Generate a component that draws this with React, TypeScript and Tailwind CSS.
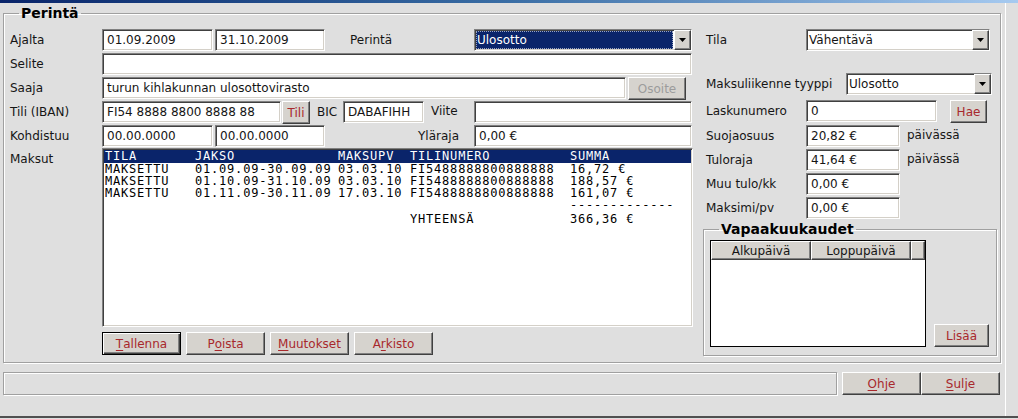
import type { ReactNode } from 'react'

const sunken =
  'border border-t-[#808080] border-l-[#808080] border-b-white border-r-white shadow-[inset_1px_1px_0_#404040,inset_-1px_-1px_0_#d4d0c8] bg-white'
const raised =
  'border border-t-white border-l-white border-b-[#404040] border-r-[#404040] shadow-[inset_-1px_-1px_0_#808080] bg-[#d6d3ce]'
const etched = 'border border-[#a0a0a0] shadow-[inset_1px_1px_0_#fff,1px_1px_0_#fff]'
const cols = 'grid grid-cols-[90px_143px_72px_160px_1fr]'

const PAYMENTS = [
  ['MAKSETTU', '01.09.09-30.09.09', '03.03.10', 'FI5488888800888888', '16,72 €'],
  ['MAKSETTU', '01.10.09-31.10.09', '03.03.10', 'FI5488888800888888', '188,57 €'],
  ['MAKSETTU', '01.11.09-30.11.09', '17.03.10', 'FI5488888800888888', '161,07 €'],
]

function Field({ className = '', value = '' }: { className?: string; value?: string }) {
  return (
    <div className={`${sunken} h-[22px] shrink-0 px-[4px] pt-[3px] leading-[15px] whitespace-nowrap overflow-hidden ${className}`}>
      {value}
    </div>
  )
}

function Btn({ className = '', children, disabled, main }: { className?: string; children: ReactNode; disabled?: boolean; main?: boolean }) {
  const frame = main
    ? 'border border-black shadow-[inset_1px_1px_0_#fff,inset_-1px_-1px_0_#404040,inset_-2px_-2px_0_#808080] bg-[#d6d3ce]'
    : raised
  return (
    <div
      className={`${frame} h-[23px] shrink-0 flex items-center justify-center leading-[14px] whitespace-nowrap ${
        disabled ? 'text-[#9c9c9c]' : 'text-[#a8282c]'
      } ${className}`}
    >
      {children}
    </div>
  )
}

function Arrow() {
  return (
    <div className={`${raised} w-[17px] shrink-0 flex items-center justify-center`}>
      <svg width="7" height="4" viewBox="0 0 7 4">
        <polygon points="0,0 7,0 3.5,4" fill="#000" />
      </svg>
    </div>
  )
}

function Select({ className = '', value, active }: { className?: string; value: string; active?: boolean }) {
  return (
    <div className={`${sunken} h-[22px] shrink-0 flex ${className}`}>
      <div className="flex-1 min-w-0 p-[1px] flex">
        <span
          className={`flex-1 px-[1px] pt-[2px] leading-[15px] whitespace-nowrap ${
            active ? 'bg-[#0a246a] text-white outline-1 outline-dotted outline-[#9aa4c0] -outline-offset-1' : ''
          }`}
        >
          {value}
        </span>
      </div>
      <Arrow />
    </div>
  )
}

function U({ children }: { children: ReactNode }) {
  return <span className="underline underline-offset-2">{children}</span>
}

export default function App() {
  return (
    <div className="w-[1018px] h-[419px] overflow-hidden bg-[#dfdfdf] font-['DejaVu_Sans',sans-serif] text-[12px] text-[#151515] flex flex-col">
      <div className="h-[3px] shrink-0 bg-linear-to-r from-[#0a246a] via-[#3a6ea5] to-[#a6caf0]" />

      <div className="w-[1006px] h-[413px] shrink-0 pl-[3px] border-r border-r-white flex flex-col">
        {/* main group */}
        <fieldset className={`${etched} mt-[2px] w-[998px] h-[358px] shrink-0 px-[6px]`}>
          <legend className="ml-[9px] px-[2px] font-bold text-[14px] leading-[16px] text-black">Perintä</legend>
          <div className="flex gap-[13px] pt-[8px]">
            {/* left column */}
            <div className="w-[683px] shrink-0 flex flex-col">
              <div className="flex h-[22px]">
                <span className="w-[92px] pt-[2px]">Ajalta</span>
                <Field className="w-[111px]" value="01.09.2009" />
                <Field className="ml-[2px] w-[110px]" value="31.10.2009" />
                <span className="w-[149px] pl-[25px] pt-[2px]">Perintä</span>
                <Select className="w-[218px]" value="Ulosotto" active />
              </div>
              <div className="flex h-[22px] mt-[2px]">
                <span className="w-[92px] pt-[2px]">Selite</span>
                <Field className="w-[590px]" />
              </div>
              <div className="flex h-[22px] mt-[2px]">
                <span className="w-[92px] pt-[2px]">Saaja</span>
                <Field className="w-[524px]" value="turun kihlakunnan ulosottovirasto" />
                <Btn className="ml-[2px] w-[58px]" disabled>
                  Osoite
                </Btn>
              </div>
              <div className="flex h-[22px] mt-[2px]">
                <span className="w-[92px] pt-[2px]">Tili (IBAN)</span>
                <Field className="w-[179px]" value="FI54 8888 8800 8888 88" />
                <Btn className="ml-[1px] w-[28px] h-[22px]">Tili</Btn>
                <span className="ml-[7px] w-[26px] pt-[2px]">BIC</span>
                <Field className="w-[81px]" value="DABAFIHH" />
                <span className="w-[50px] pl-[7px] pt-[1px]">Viite</span>
                <Field className="w-[218px]" />
              </div>
              <div className="flex h-[22px] mt-[2px]">
                <span className="w-[92px] pt-[2px]">Kohdistuu</span>
                <Field className="w-[111px]" value="00.00.0000" />
                <Field className="ml-[2px] w-[110px]" value="00.00.0000" />
                <span className="w-[149px] pr-[15px] pt-[2px] text-right">Yläraja</span>
                <Field className="w-[218px]" value="0,00 €" />
              </div>
              <div className="flex mt-[1px]">
                <span className="w-[92px] pt-[2px]">Maksut</span>
                <div
                  className={`${sunken} w-[591px] h-[179px] font-['DejaVu_Sans_Mono',monospace] text-[12px] tracking-[0.8px] text-black`}
                >
                  <div className={`${cols} bg-[#0a246a] text-white h-[13px] leading-[13px] pl-[1px] mt-[1px] mx-[1px]`}>
                    <span>TILA</span>
                    <span>JAKSO</span>
                    <span>MAKSUPV</span>
                    <span>TILINUMERO</span>
                    <span>SUMMA</span>
                  </div>
                  {PAYMENTS.map((p, i) => (
                    <div key={i} className={`${cols} h-[12px] leading-[12px] pl-[2px] whitespace-pre`}>
                      {p.map((c, j) => (
                        <span key={j}>{c}</span>
                      ))}
                    </div>
                  ))}
                  <div className={`${cols} h-[12px] leading-[12px] pl-[2px]`}>
                    <span />
                    <span />
                    <span />
                    <span />
                    <span>-------------</span>
                  </div>
                  <div className={`${cols} h-[12px] leading-[12px] pl-[2px] mt-[2px]`}>
                    <span />
                    <span />
                    <span />
                    <span>YHTEENSÄ</span>
                    <span>366,36 €</span>
                  </div>
                </div>
              </div>
              <div className="flex gap-[5px] ml-[92px] mt-[5px]">
                <Btn className="w-[79px]" main>
                  <U>T</U>allenna
                </Btn>
                <Btn className="w-[79px]">
                  P<U>o</U>ista
                </Btn>
                <Btn className="w-[79px]">
                  <U>M</U>uutokset
                </Btn>
                <Btn className="w-[79px]">
                  A<U>r</U>kisto
                </Btn>
              </div>
            </div>

            {/* right column */}
            <div className="w-[287px] shrink-0 flex flex-col">
              <div className="flex h-[22px]">
                <span className="w-[100px] pt-[2px]">Tila</span>
                <Select className="w-[184px]" value="Vähentävä" />
              </div>
              <div className="flex items-center h-[22px] mt-[22px]">
                <span className="w-[140px] whitespace-nowrap">Maksuliikenne tyyppi</span>
                <Select className="w-[146px]" value="Ulosotto" />
              </div>
              <div className="flex h-[23px] mt-[5px]">
                <span className="w-[100px] pt-[2px]">Laskunumero</span>
                <Field className="w-[131px]" value="0" />
                <Btn className="ml-[13px] w-[37px]">Hae</Btn>
              </div>
              {[
                ['Suojaosuus', '20,82 €', true],
                ['Tuloraja', '41,64 €', true],
                ['Muu tulo/kk', '0,00 €', false],
                ['Maksimi/pv', '0,00 €', false],
              ].map(([label, value, perDay], i) => (
                <div key={i} className="flex h-[22px] mt-[2px]">
                  <span className="w-[100px] pt-[2px]">{label as string}</span>
                  <Field className="w-[94px]" value={value as string} />
                  {perDay && <span className="ml-[7px] pt-[1px]">päivässä</span>}
                </div>
              ))}

              <fieldset className={`${etched} mt-[2px] -ml-[3px] w-[294px] h-[135px] shrink-0 px-[6px]`}>
                <legend className="ml-[9px] px-[2px] font-bold text-[14px] leading-[16px] text-black">Vapaakuukaudet</legend>
                <div className="flex items-end pt-[3px]">
                  <div className="w-[216px] h-[107px] border border-black bg-white flex flex-col">
                    <div className="flex h-[19px] bg-[#d6d3ce]">
                      <div className={`${raised} w-[100px] flex items-center justify-center`}>Alkupäivä</div>
                      <div className={`${raised} w-[100px] flex items-center justify-center`}>Loppupäivä</div>
                      <div className={`${raised} flex-1`} />
                    </div>
                  </div>
                  <Btn className="ml-[8px] w-[55px]">Lisää</Btn>
                </div>
              </fieldset>
            </div>
          </div>
        </fieldset>

        {/* footer */}
        <div className="flex mt-[9px]">
          <div className={`${etched} w-[834px] h-[23px]`} />
          <Btn className="ml-[5px] w-[79px]">
            <U>O</U>hje
          </Btn>
          <Btn className="w-[79px]">
            <U>S</U>ulje
          </Btn>
        </div>
      </div>
      <div className="h-[2px] shrink-0 bg-[#505050]" />
    </div>
  )
}
